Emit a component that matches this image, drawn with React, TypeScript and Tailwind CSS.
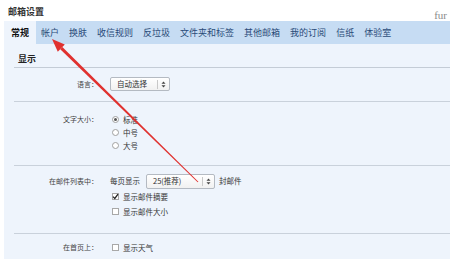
import React from "react";

const tabs = ["帐户", "换肤", "收信规则", "反垃圾", "文件夹和标签", "其他邮箱", "我的订阅", "信纸", "体验室"];

function Arrows() {
  return (
    <svg width="5" height="7" viewBox="0 0 5 7" className="block">
      <path d="M2.5 0.5 L4.5 2.8 L0.5 2.8 Z" fill="#444" />
      <path d="M2.5 6.5 L4.5 4.2 L0.5 4.2 Z" fill="#444" />
    </svg>
  );
}

function Select({ text, w, h }: { text: string; w: string; h: string }) {
  return (
    <div
      className={`${w} ${h} flex items-center border border-[#b4bac2] rounded-[2px] bg-gradient-to-b from-white to-[#f1f1f1]`}
    >
      <span className="flex-1 pl-[6px] text-[7.5px] leading-none text-[#333]">{text}</span>
      <div className="h-[9px] w-px bg-[#c8c8c8]" />
      <div className="w-[11px] flex justify-center">
        <Arrows />
      </div>
    </div>
  );
}

function Radio({ checked, label }: { checked?: boolean; label: string }) {
  return (
    <div className="flex items-center h-[13px] pl-[2px]">
      <div className="w-[7px] h-[7px] rounded-full border border-[#a0a0a0] bg-white flex items-center justify-center">
        {checked && <div className="w-[3px] h-[3px] rounded-full bg-[#555]" />}
      </div>
      <span className="ml-[4px] text-[7.5px] leading-none text-[#333]">{label}</span>
    </div>
  );
}

function Check({ checked, label, h }: { checked?: boolean; label: string; h: string }) {
  return (
    <div className={`flex items-center ${h} pl-[2px]`}>
      <div className="w-[7px] h-[7px] border border-[#a8a8a8] bg-white relative">
        {checked && (
          <svg width="7" height="7" viewBox="0 0 7 7" className="absolute -left-px -top-px">
            <path d="M1 3.6 L2.8 5.4 L6 1.2" stroke="#222" strokeWidth="1.3" fill="none" />
          </svg>
        )}
      </div>
      <span className="ml-[4px] text-[7.5px] leading-none text-[#333]">{label}</span>
    </div>
  );
}

function Label({ text, h }: { text: string; h: string }) {
  return (
    <div className={`w-[84px] ${h} flex items-center justify-end text-[7px] leading-none text-[#444] shrink-0`}>
      {text}
    </div>
  );
}

export default function App() {
  return (
    <div className="w-[450px] h-[259px] bg-white overflow-hidden relative font-['Noto_Sans_CJK_SC','Noto_Sans',sans-serif]">
      <div className="h-[21px] flex items-start justify-between">
        <div className="pl-[8px] pt-[7px] text-[9px] leading-none font-bold text-[#333]">邮箱设置</div>
        <div className="pt-[10px] text-[11px] leading-none text-[#8a8a8a] font-['Liberation_Serif',serif] mr-[3px]">
          fur
        </div>
      </div>
      <div className="ml-[4px]">
        <div className="h-[23px] bg-[#c6dcf3] flex items-stretch">
          <div className="px-[7px] bg-[#eef4fc] flex items-center text-[9px] leading-none font-bold text-[#111]">
            常规
          </div>
          {tabs.map((t) => (
            <div key={t} className="px-[5px] flex items-center text-[9px] leading-none text-[#2a4b78]">
              {t}
            </div>
          ))}
        </div>
        <div className="bg-[#eef4fc] h-[215px] pl-[10px]">
          <div className="h-[24px] pt-[5px] pl-[4px] flex items-center border-b border-[#c4ccd6] text-[9px] leading-none font-bold text-[#222]">
            显示
          </div>
          <div className="flex gap-[12px] pt-[9px] pb-[10px] border-b border-[#c9d1db]">
            <Label text="语言：" h="h-[14px]" />
            <Select text="自动选择" w="w-[60px]" h="h-[14px]" />
          </div>
          <div className="flex gap-[12px] pt-[11px] pb-[13px] border-b border-[#c9d1db]">
            <Label text="文字大小：" h="h-[13px]" />
            <div className="flex flex-col">
              <Radio checked label="标准" />
              <Radio label="中号" />
              <Radio label="大号" />
            </div>
          </div>
          <div className="flex gap-[12px] pt-[7px] pb-[14px] border-b border-[#c9d1db]">
            <Label text="在邮件列表中：" h="h-[16px]" />
            <div className="flex flex-col">
              <div className="flex items-center h-[16px]">
                <span className="text-[7.5px] leading-none text-[#333]">每页显示</span>
                <div className="ml-[6px]">
                  <Select text="25(推荐)" w="w-[69px]" h="h-[15px]" />
                </div>
                <span className="ml-[4px] text-[7.5px] leading-none text-[#333]">封邮件</span>
              </div>
              <Check checked label="显示邮件摘要" h="h-[15px]" />
              <Check label="显示邮件大小" h="h-[15px]" />
            </div>
          </div>
          <div className="flex gap-[12px] pt-[7px]">
            <Label text="在首页上：" h="h-[13px]" />
            <Check label="显示天气" h="h-[13px]" />
          </div>
        </div>
      </div>
      <svg className="absolute inset-0 pointer-events-none" width="450" height="259" viewBox="0 0 450 259">
        <polygon points="52,39 57.8,51.7 64.8,44.5" fill="#e0312f" />
        <polygon points="60.25,49.17 62.35,47.03 198.35,181.64 197.65,182.36" fill="#e0312f" />
      </svg>
    </div>
  );
}
